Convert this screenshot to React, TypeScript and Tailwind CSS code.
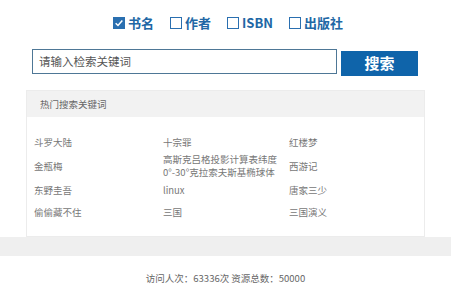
import React from "react";

const keywords: string[][] = [
  ["斗罗大陆", "十宗罪", "红楼梦"],
  ["金瓶梅", "高斯克吕格投影计算表纬度\n0°-30°克拉索夫斯基椭球体", "西游记"],
  ["东野圭吾", "linux", "唐家三少"],
  ["偷偷藏不住", "三国", "三国演义"],
];

function Check({ checked, label }: { checked?: boolean; label: string }) {
  return (
    <label className="flex items-center gap-[3px] text-[13px] font-bold text-[#2167a5]">
      {checked ? (
        <span className="flex h-[12px] w-[12px] items-center justify-center bg-[#2a6fb0]">
          <svg viewBox="0 0 12 12" className="h-[10px] w-[10px]">
            <path d="M2 6.2 L4.8 9 L10 3" stroke="#fff" strokeWidth="1.8" fill="none" />
          </svg>
        </span>
      ) : (
        <span className="h-[12px] w-[12px] border-[1.5px] border-[#2a6fb0] bg-white" />
      )}
      <span>{label}</span>
    </label>
  );
}

export default function App() {
  return (
    <div
      className="h-[288px] w-[451px] overflow-hidden bg-white"
      style={{ fontFamily: '"Noto Sans CJK SC", "Open Sans", sans-serif' }}
    >
      {/* search type */}
      <div className="flex h-[17px] mt-[14px] items-center pl-[113px] gap-[16px]">
        <Check checked label="书名" />
        <Check label="作者" />
        <Check label="ISBN" />
        <Check label="出版社" />
      </div>

      {/* search bar */}
      <div className="mt-[18px] flex items-start pl-[32px] gap-[4px]">
        <div className="flex h-[25px] w-[305px] items-center border border-[#4e7796] px-[6px] text-[11.5px] text-[#555]">
          请输入检索关键词
        </div>
        <button className="mt-[2px] flex h-[25px] w-[77px] items-center justify-center bg-[#0f64aa] text-[15px] font-bold text-white">
          搜索
        </button>
      </div>

      {/* hot keywords */}
      <div className="mx-[26px] mt-[14px] h-[147px] border border-[#ececec]">
        <div className="flex h-[26px] items-center bg-[#f2f2f2] pl-[13px] text-[9.5px] text-[#666]">
          热门搜索关键词
        </div>
        <div className="grid grid-cols-[129px_126px_1fr] pl-[7px] pt-[14px] text-[9.5px] leading-[13px] text-[#777]">
          {keywords.map((row, i) =>
            row.map((k, j) => (
              <div
                key={i + "-" + j}
                className={
                  "flex items-center whitespace-pre-line " +
                  (i === 1 ? "h-[26px]" : "h-[22px]")
                }
              >
                {k}
              </div>
            ))
          )}
        </div>
      </div>

      <div className="h-[19px] bg-[#efefef]" />

      <div className="mt-[15px] text-center text-[9.5px] text-[#666]">
        访问人次：63336次 资源总数：50000
      </div>
    </div>
  );
}
